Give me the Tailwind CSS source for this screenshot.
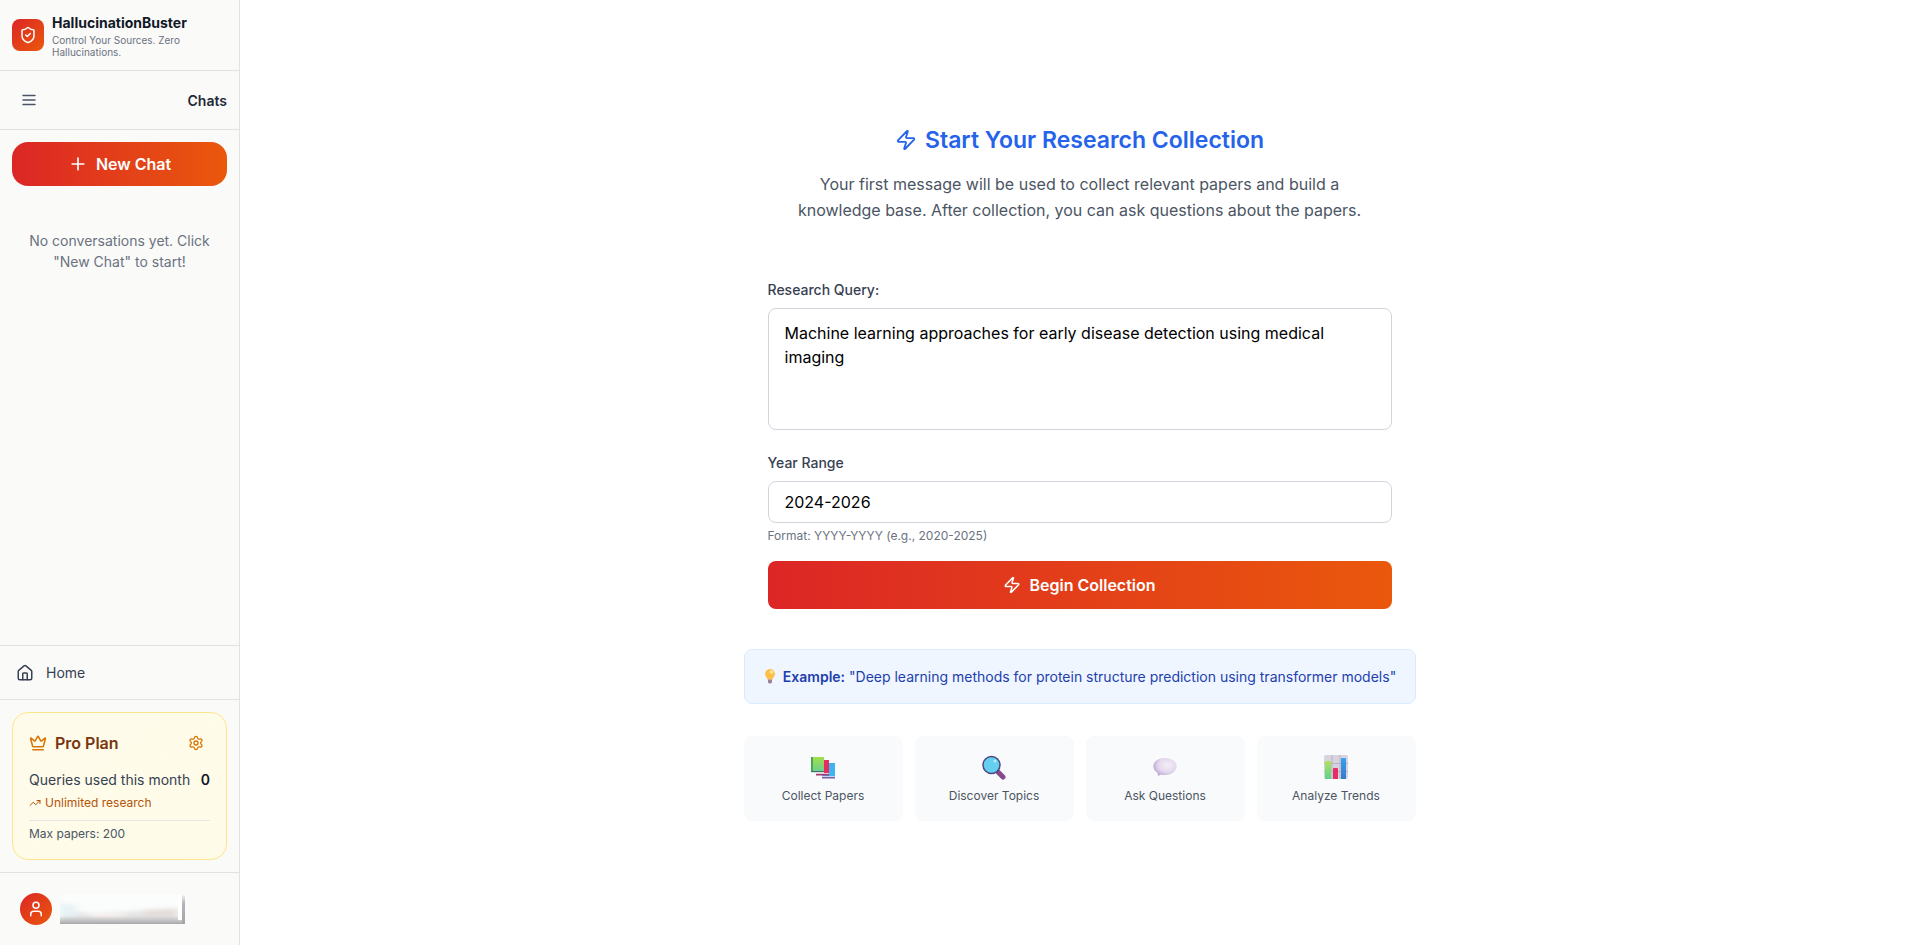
<!DOCTYPE html>
<html lang="en">

<head>
    <meta charset="UTF-8">
    <meta name="viewport" content="width=device-width, initial-scale=1.0">
    <title>HallucinationBuster</title>

    <!-- Tailwind CSS -->
    <script src="https://cdn.jsdelivr.net/npm/@tailwindcss/browser@4"></script>
</head>

<body class="flex min-h-screen bg-white font-['Inter','Liberation_Sans',sans-serif] leading-normal text-[#111827]">

    <!-- Sidebar -->
    <aside class="flex w-60 shrink-0 flex-col border-r border-[#e2e2df] bg-[#fafaf9]">

        <!-- Brand -->
        <div class="flex items-center gap-2 border-b border-[#e2e2df] p-3">
            <div class="flex size-8 shrink-0 items-center justify-center rounded-lg bg-linear-to-br/srgb from-[#dc2626] to-[#ea580c]">
                <svg class="size-[18px] text-white" viewBox="0 0 24 24" fill="none" stroke="currentColor" stroke-width="2" stroke-linecap="round" stroke-linejoin="round">
                    <path d="M20 13c0 5-3.5 7.5-7.66 8.95a1 1 0 0 1-.67-.01C7.5 20.5 4 18 4 13V6a1 1 0 0 1 1-1c2 0 4.5-1.2 6.24-2.72a1.17 1.17 0 0 1 1.52 0C14.51 3.81 17 5 19 5a1 1 0 0 1 1 1z" />
                    <path d="m9 12 2 2 4-4" />
                </svg>
            </div>
            <div>
                <h1 class="text-sm/[22px] font-bold">HallucinationBuster</h1>
                <p class="text-[10px]/3 text-[#6b7280]">Control Your Sources. Zero Hallucinations.</p>
            </div>
        </div>

        <!-- Chats Header -->
        <div class="flex items-center justify-between border-b border-[#e2e2df] p-3">
            <button type="button" aria-label="Toggle sidebar" class="flex size-[34px] items-center justify-center rounded-lg text-[#4b5563]">
                <svg class="size-[18px]" viewBox="0 0 24 24" fill="none" stroke="currentColor" stroke-width="2" stroke-linecap="round" stroke-linejoin="round">
                    <path d="M4 6h16M4 12h16M4 18h16" />
                </svg>
            </button>
            <h2 class="text-sm/[21px] font-semibold text-[#1f2937]">Chats</h2>
        </div>

        <!-- Conversations -->
        <div class="flex-1 p-3">
            <button type="button" class="flex h-11 w-full items-center justify-center gap-2 rounded-2xl bg-linear-to-r/srgb from-[#dc2626] to-[#ea580c] font-semibold text-white">
                <svg class="size-5" viewBox="0 0 24 24" fill="none" stroke="currentColor" stroke-width="2" stroke-linecap="round" stroke-linejoin="round">
                    <path d="M5 12h14M12 5v14" />
                </svg>
                New Chat
            </button>
            <p class="mt-3 px-4 py-8 text-center text-sm/[21px] text-[#6b7280]">No conversations yet. Click "New Chat" to start!</p>
        </div>

        <!-- Navigation -->
        <nav class="border-t border-[#e2e2df] p-4">
            <a href="#" class="flex items-center gap-3 text-sm/[21px] text-[#374151]">
                <svg class="size-[18px]" viewBox="0 0 24 24" fill="none" stroke="currentColor" stroke-width="2" stroke-linecap="round" stroke-linejoin="round">
                    <path d="M15 21v-8a1 1 0 0 0-1-1h-4a1 1 0 0 0-1 1v8" />
                    <path d="M3 10a2 2 0 0 1 .709-1.528l7-5.999a2 2 0 0 1 2.582 0l7 5.999A2 2 0 0 1 21 10v9a2 2 0 0 1-2 2H5a2 2 0 0 1-2-2z" />
                </svg>
                Home
            </a>
        </nav>

        <!-- Plan -->
        <div class="border-t border-[#e2e2df] p-3">
            <div class="rounded-2xl border border-[#fde68a] bg-linear-to-br/srgb from-[#fffbeb] to-[#fefce8] p-4">
                <div class="mb-3 flex items-center justify-between">
                    <div class="flex items-center gap-2">
                        <svg class="size-[18px] text-[#d97706]" viewBox="0 0 24 24" fill="none" stroke="currentColor" stroke-width="2" stroke-linecap="round" stroke-linejoin="round">
                            <path d="M11.562 3.266a.5.5 0 0 1 .876 0L15.39 8.87a1 1 0 0 0 1.516.294L21.183 5.5a.5.5 0 0 1 .798.519l-2.834 10.246a1 1 0 0 1-.956.734H5.81a1 1 0 0 1-.957-.734L2.02 6.02a.5.5 0 0 1 .798-.519l4.276 3.664a1 1 0 0 0 1.516-.294z" />
                            <path d="M5 21h14" />
                        </svg>
                        <span class="font-semibold text-[#78350f]">Pro Plan</span>
                    </div>
                    <button type="button" aria-label="Plan settings" class="flex size-7 items-center justify-center text-[#d97706]">
                        <svg class="size-4" viewBox="0 0 24 24" fill="none" stroke="currentColor" stroke-width="2" stroke-linecap="round" stroke-linejoin="round">
                            <path d="M9.671 4.136a2.34 2.34 0 0 1 4.659 0 2.34 2.34 0 0 0 3.319 1.915 2.34 2.34 0 0 1 2.33 4.033 2.34 2.34 0 0 0 0 3.831 2.34 2.34 0 0 1-2.33 4.033 2.34 2.34 0 0 0-3.319 1.915 2.34 2.34 0 0 1-4.659 0 2.34 2.34 0 0 0-3.32-1.915 2.34 2.34 0 0 1-2.33-4.033 2.34 2.34 0 0 0 0-3.831A2.34 2.34 0 0 1 6.35 6.051a2.34 2.34 0 0 0 3.319-1.915" />
                            <circle cx="12" cy="12" r="3" />
                        </svg>
                    </button>
                </div>
                <div class="flex items-center justify-between text-sm/[21px]">
                    <span class="text-[#374151]">Queries used this month</span>
                    <span class="font-semibold">0</span>
                </div>
                <div class="mt-1 flex items-center gap-1 text-xs/[18px] text-[#b45309]">
                    <svg class="size-3" viewBox="0 0 24 24" fill="none" stroke="currentColor" stroke-width="2" stroke-linecap="round" stroke-linejoin="round">
                        <path d="M16 7h6v6" />
                        <path d="m22 7-8.5 8.5-5-5L2 17" />
                    </svg>
                    Unlimited research
                </div>
                <div class="mt-2 border-t border-[#e5e7eb] pt-1 text-xs/[18px] text-[#4b5563]">Max papers: 200</div>
            </div>
        </div>

        <!-- Account -->
        <div class="flex items-center gap-2 border-t border-[#e2e2df] p-5">
            <div class="flex size-8 items-center justify-center rounded-full bg-linear-to-br/srgb from-[#dc2626] to-[#ea580c] text-white">
                <svg class="size-[18px]" viewBox="0 0 24 24" fill="none" stroke="currentColor" stroke-width="2" stroke-linecap="round" stroke-linejoin="round">
                    <path d="M19 21v-2a4 4 0 0 0-4-4H9a4 4 0 0 0-4 4v2" />
                    <circle cx="12" cy="7" r="4" />
                </svg>
            </div>
            <svg class="h-[30px] w-[125px]" viewBox="0 0 125 30">
                <defs>
                    <filter id="soft" x="-20%" y="-50%" width="140%" height="200%">
                        <feGaussianBlur stdDeviation="4 2" />
                    </filter>
                    <linearGradient id="base-shade" x2="0" y2="1">
                        <stop offset="0" stop-color="#a5a5a8" stop-opacity="0" />
                        <stop offset="1" stop-color="#a5a5a8" />
                    </linearGradient>
                    <linearGradient id="edge-shade" x2="0" y2="1">
                        <stop offset="0" stop-color="#f0f0f0" />
                        <stop offset="0.300" stop-color="#b4b3bb" />
                        <stop offset="1" stop-color="#a5a5a8" />
                    </linearGradient>
                </defs>
                <rect width="125" height="30" fill="#fbfcfc" />
                <g filter="url(#soft)">
                    <path d="M0 8l14 9 16 3 36-2 24-2 30-2v14H0z" fill="#e4e3e4" />
                    <rect x="0" y="10" width="16" height="13" fill="#e6f3f6" />
                    <rect x="32" y="20" width="32" height="4" fill="#f7f0ec" />
                    <rect x="84" y="16" width="30" height="7" fill="#e3dcd8" />
                </g>
                <rect y="22" width="125" height="8" fill="url(#base-shade)" />
                <rect x="118" y="3" width="4" height="23" fill="#fff" />
                <rect x="122" y="1" width="3" height="29" fill="url(#edge-shade)" />
            </svg>
        </div>
    </aside>

    <!-- Main Content -->
    <main class="flex min-w-0 flex-1 flex-col items-center justify-center">
        <div class="w-full max-w-2xl">

            <!-- Heading -->
            <div class="text-center">
                <h2 class="flex items-center justify-center gap-2 text-[23px]/[30px] font-semibold text-[#2563eb]">
                    <svg class="size-[22px]" viewBox="0 0 24 24" fill="none" stroke="currentColor" stroke-width="2" stroke-linecap="round" stroke-linejoin="round">
                        <path d="M4 14a1 1 0 0 1-.78-1.63l9.9-10.2a.5.5 0 0 1 .86.46l-1.92 6.02A1 1 0 0 0 13 10h7a1 1 0 0 1 .78 1.63l-9.9 10.2a.5.5 0 0 1-.86-.46l1.92-6.02A1 1 0 0 0 11 14z" />
                    </svg>
                    Start Your Research Collection
                </h2>
                <p class="mx-auto mt-4 max-w-xl text-base/[26px] text-[#4b5563]">Your first message will be used to collect relevant papers and build a knowledge base. After collection, you can ask questions about the papers.</p>
            </div>

            <!-- Collection Form -->
            <form class="mt-8 p-6">
                <label for="query" class="mb-2 block text-sm/[21px] font-medium text-[#374151]">Research Query:</label>
                <textarea id="query" rows="4" class="mb-[22px] block w-full resize-none rounded-lg border border-[#d1d5db] bg-white px-4 py-3 text-base/6 text-black">Machine learning approaches for early disease detection using medical imaging</textarea>

                <label for="years" class="mb-2 block text-sm/[21px] font-medium text-[#374151]">Year Range</label>
                <input id="years" type="text" value="2024-2026" class="block w-full rounded-lg border border-[#d1d5db] bg-white px-4 py-2 text-base/6 text-black">
                <p class="mt-1 text-xs/[18px] text-[#6b7280]">Format: YYYY-YYYY (e.g., 2020-2025)</p>

                <button type="button" class="mt-4 flex h-12 w-full items-center justify-center gap-2 rounded-lg bg-linear-to-r/srgb from-[#dc2626] to-[#ea580c] font-semibold text-white">
                    <svg class="size-[18px]" viewBox="0 0 24 24" fill="none" stroke="currentColor" stroke-width="2" stroke-linecap="round" stroke-linejoin="round">
                        <path d="M4 14a1 1 0 0 1-.78-1.63l9.9-10.2a.5.5 0 0 1 .86.46l-1.92 6.02A1 1 0 0 0 13 10h7a1 1 0 0 1 .78 1.63l-9.9 10.2a.5.5 0 0 1-.86-.46l1.92-6.02A1 1 0 0 0 11 14z" />
                    </svg>
                    Begin Collection
                </button>
            </form>

            <!-- Example -->
            <div class="mt-4 flex items-center justify-center gap-1 rounded-lg border border-[#dbeafe] bg-[#eff6ff] py-4 text-sm/[21px] text-[#1e40af]">
                <svg class="h-4 w-4" viewBox="0 0 16 16">
                    <path d="M7 1a5 5 0 0 0-5 5c0 2 1.700 3 2.500 5.500h5C10.300 9 12 8 12 6a5 5 0 0 0-5-5z" fill="#fdc046" />
                    <ellipse cx="8.500" cy="4" rx="2" ry="1.800" fill="#ffe49a" />
                    <path d="M5 11.500h4V14a2 1.500 0 0 1-4 0z" fill="#9a8298" />
                </svg>
                <p><strong class="font-semibold">Example:</strong> "Deep learning methods for protein structure prediction using transformer models"</p>
            </div>

            <!-- Features -->
            <div class="mt-8 grid grid-cols-4 gap-3 text-center text-xs/[18px] text-[#4b5563]">
                <div class="rounded-lg bg-[#f9fafb] p-4">
                    <svg class="mx-auto mb-1 h-[31px] w-6" viewBox="0 0 24 31">
                        <defs>
                            <linearGradient id="book-green" x2="0" y2="1">
                                <stop stop-color="#a5de4c" />
                                <stop offset="1" stop-color="#6bd18b" />
                            </linearGradient>
                        </defs>
                        <rect x="11" y="11" width="13" height="13" fill="#3fb5f0" />
                        <rect x="11" y="24" width="13" height="1" fill="#c4d5ee" />
                        <rect x="11" y="25" width="13" height="1.500" fill="#7b5fae" />
                        <rect x="5" y="8" width="13" height="13" fill="#e62c60" />
                        <rect x="5" y="21" width="13" height="1" fill="#ecc6df" />
                        <rect x="5" y="22" width="13" height="1.500" fill="#a5376f" />
                        <rect y="5" width="13" height="14" fill="url(#book-green)" />
                        <rect y="5" width="2" height="14" fill="#4ba650" />
                        <rect y="19" width="13" height="1" fill="#496f76" />
                        <rect y="20" width="13" height="1" fill="#cde3d5" />
                    </svg>
                    Collect Papers
                </div>
                <div class="rounded-lg bg-[#f9fafb] p-4">
                    <svg class="mx-auto mb-1 h-[31px] w-6" viewBox="0 0 24 31">
                        <path d="M16 20l5 5" stroke="#85498a" stroke-width="5" stroke-linecap="round" />
                        <circle cx="9.500" cy="13" r="8.500" fill="#62d0ee" stroke="#504981" stroke-width="1.500" />
                        <circle cx="13" cy="9" r="1.500" fill="#b8ecfa" />
                    </svg>
                    Discover Topics
                </div>
                <div class="rounded-lg bg-[#f9fafb] p-4">
                    <svg class="mx-auto mb-1 h-[31px] w-6" viewBox="0 0 24 31">
                        <defs>
                            <radialGradient id="bubble" cx="0.600" cy="0.400" r="0.650">
                                <stop stop-color="#f3eef6" />
                                <stop offset="0.600" stop-color="#e4d9ee" />
                                <stop offset="1" stop-color="#b7a2d2" />
                            </radialGradient>
                        </defs>
                        <path d="M12 6c6.500 0 11.700 3.700 11.700 8.300S18.500 23 12 23c-1.500 0-3-.2-4.200-.6L5 24l-.5-3.200C2 19.300.3 17 .3 14.300.3 9.700 5.500 6 12 6z" fill="url(#bubble)" />
                    </svg>
                    Ask Questions
                </div>
                <div class="rounded-lg bg-[#f9fafb] p-4">
                    <svg class="mx-auto mb-1 h-[31px] w-6" viewBox="0 0 24 31">
                        <defs>
                            <linearGradient id="bar-green" x2="0" y2="1">
                                <stop stop-color="#b1e35c" />
                                <stop offset="1" stop-color="#5bd38b" />
                            </linearGradient>
                            <linearGradient id="bar-blue" x2="0" y2="1">
                                <stop stop-color="#33a3ef" />
                                <stop offset="1" stop-color="#3878cb" />
                            </linearGradient>
                        </defs>
                        <rect y="3" width="24" height="24" rx="2" fill="#d9d3e0" />
                        <path d="M8 3v24M16 3v24M0 11.500h24M0 19.500h24" stroke="#b9b1c2" />
                        <path d="M1 27V10a1 1 0 0 1 1-1h4a1 1 0 0 1 1 1v17z" fill="url(#bar-green)" />
                        <path d="M9 27V17a1 1 0 0 1 1-1h3a1 1 0 0 1 1 1v10z" fill="#e52d67" />
                        <path d="M17 27V7a1 1 0 0 1 1-1h3a1 1 0 0 1 1 1v20z" fill="url(#bar-blue)" />
                    </svg>
                    Analyze Trends
                </div>
            </div>
        </div>
    </main>

</body>

</html>
